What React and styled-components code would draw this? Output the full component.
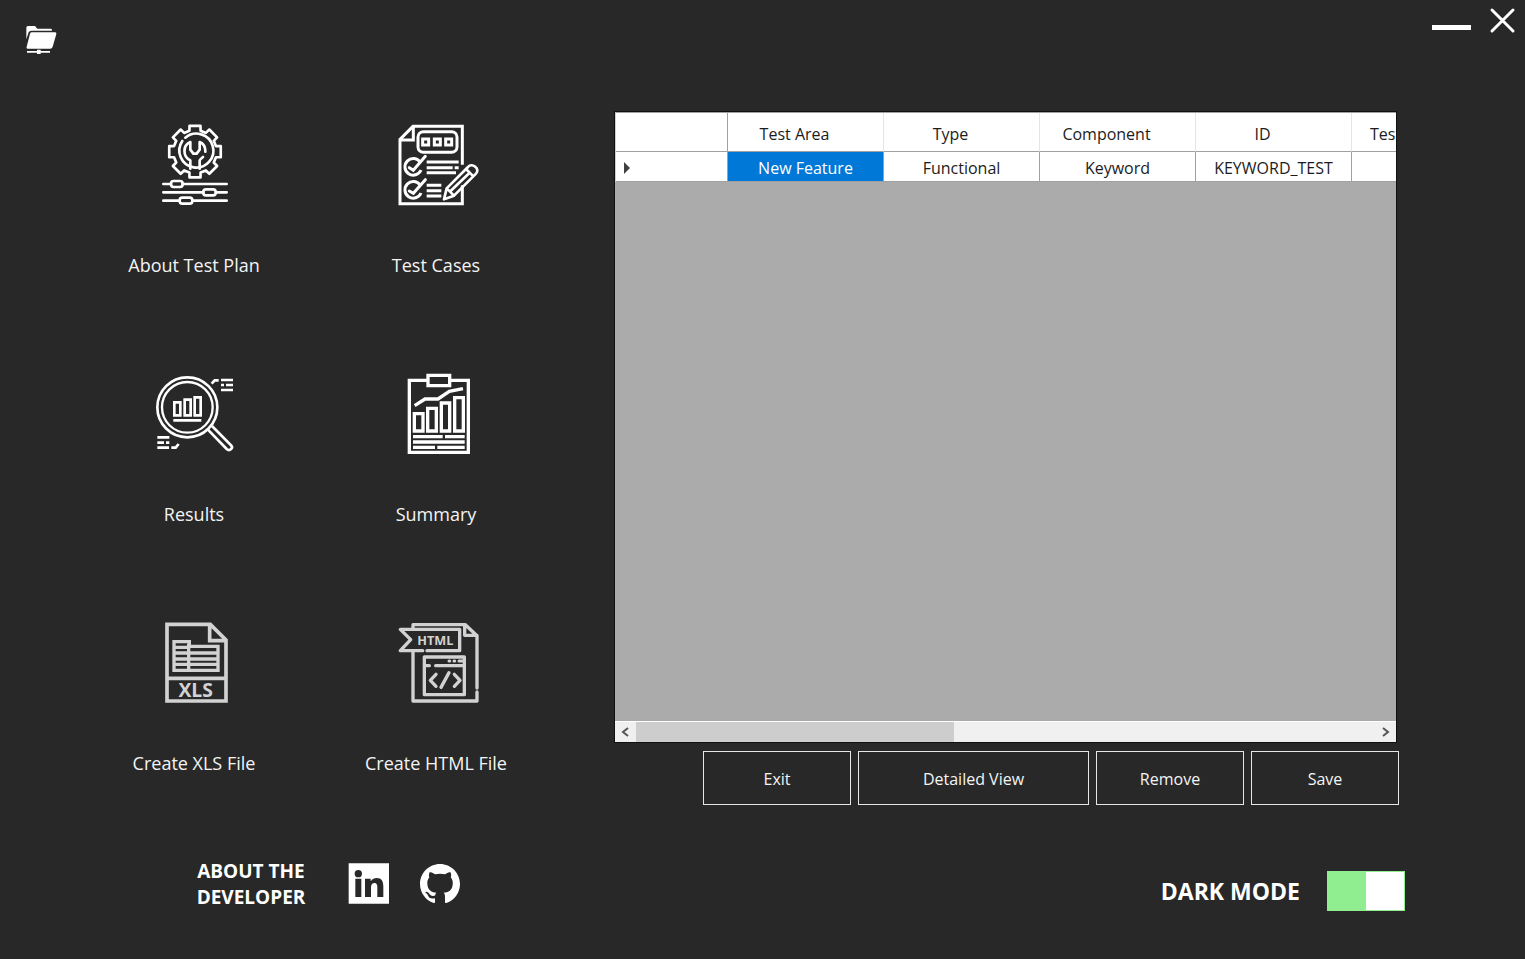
import React, { useState } from "react";
import styled, { createGlobalStyle } from "styled-components";

const GlobalStyle = createGlobalStyle`
  * { box-sizing: border-box; }
  body {
    margin: 0;
    background: #282828;
    color: #fff;
    font-family: "Open Sans", "Noto Sans", sans-serif;
  }
  button { font: inherit; color: inherit; cursor: pointer; }
`;

const Page = styled.div`
  display: flex;
  flex-direction: column;
  min-height: 100vh;
  background: #282828;
`;

const TopBar = styled.header`
  display: flex;
  justify-content: space-between;
  align-items: flex-start;
  height: 111px;
  padding: 6px 9px 0 24px;
`;

const IconButton = styled.button`
  display: flex;
  padding: 0;
  border: 0;
  background: none;
`;

const FolderButton = styled(IconButton)`
  margin-top: 16px;
`;

const WindowControls = styled.div`
  display: flex;
  gap: 16px;
`;

const Main = styled.main`
  display: flex;
  gap: 57px;
  padding: 0 126px 0 73px;
`;

const TileGrid = styled.nav`
  display: grid;
  flex: none;
  grid-template-columns: repeat(2, 242px);
  grid-auto-rows: 249px;
`;

const TileButton = styled.button`
  display: flex;
  flex-direction: column;
  align-items: center;
  gap: 41px;
  padding: 5px 0 0;
  border: 0;
  background: none;
  font-size: 18px;
  line-height: 24px;
  color: #f4f4f4;
`;

const TileIcon = styled.svg`
  width: 96px;
  height: 96px;
  fill: none;
  stroke: ${(p) => (p.$muted ? "#d2d2d2" : "#fff")};
  stroke-width: ${(p) => p.$weight || 9};
  color: ${(p) => (p.$muted ? "#d2d2d2" : "#fff")};
`;

const IconText = styled.text`
  fill: currentColor;
  stroke: none;
  font-family: "Open Sans", sans-serif;
  font-weight: 700;
  font-size: ${(p) => p.$size}px;
  text-anchor: middle;
`;

const Workspace = styled.section`
  display: flex;
  flex: 1;
  flex-direction: column;
  gap: 8px;
  min-width: 0;
  padding-bottom: 53px;
`;

const GridPanel = styled.div`
  display: flex;
  flex: 1;
  flex-direction: column;
  margin-right: 2px;
  border: 1px solid #101010;
  background: #ababab;
`;

const TableViewport = styled.div`
  flex: 1;
  overflow: hidden;
`;

const Table = styled.table`
  width: 893px;
  table-layout: fixed;
  border-collapse: separate;
  border-spacing: 0;
  border-top: 1px solid #a0a0a0;
  border-left: 1px solid #d0d0d0;
  background: #fff;
  color: #1c1c1c;
  font-size: 16px;
`;

const HeadCell = styled.th`
  width: ${(p) => (p.$corner ? 112 : 156)}px;
  height: 39px;
  padding: ${(p) => (p.$clipped ? "3px 0 0 18px" : "3px 22px 0 0")};
  border-right: 1px solid ${(p) => (p.$corner ? "#a0a0a0" : "#e5e5e5")};
  border-bottom: 1px solid #a0a0a0;
  font-weight: 400;
  text-align: ${(p) => (p.$clipped ? "left" : "center")};
`;

const Cell = styled.td`
  height: 30px;
  padding: 2px 0 0;
  border-right: 1px solid #a0a0a0;
  border-bottom: 1px solid #a0a0a0;
  background: ${(p) => (p.$selected ? "#0078d7" : "#fff")};
  color: ${(p) => (p.$selected ? "#fff" : "#1c1c1c")};
  text-align: center;
`;

const RowMarker = styled(Cell)`
  padding-left: 7px;
  text-align: left;
  svg { display: block; }
`;

const ScrollBar = styled.div`
  display: flex;
  height: 21px;
  border-top: 1px solid #fff;
  background: #f0f0f0;
`;

const ScrollButton = styled(IconButton)`
  flex: none;
  align-items: center;
  justify-content: center;
  width: 21px;
`;

const ScrollTrack = styled.div`
  flex: 1;
`;

const ScrollThumb = styled.div`
  width: 43%;
  height: 100%;
  background: #cdcdcd;
`;

const Actions = styled.div`
  display: flex;
  justify-content: flex-end;
  gap: 7px;
`;

const ActionButton = styled.button`
  width: ${(p) => (p.$wide ? 231 : 148)}px;
  height: 54px;
  padding: 2px 0 0;
  border: 1px solid #e6e6e6;
  background: #282828;
  font-size: 16px;
  color: #f4f4f4;
`;

const Footer = styled.footer`
  display: flex;
  justify-content: space-between;
  align-items: flex-start;
  padding: 0 120px 48px 191px;
`;

const Developer = styled.div`
  display: flex;
  align-items: center;
  gap: 30px;
`;

const DeveloperTitle = styled.h2`
  width: 120px;
  margin: 0 7px 0 0;
  font-size: 19px;
  font-weight: 700;
  line-height: 26px;
  text-align: center;
`;

const SocialLink = styled.a`
  display: flex;
  color: #fff;
`;

const ModeLabel = styled.label`
  display: flex;
  align-items: center;
  gap: 27px;
  padding-top: 13px;
  font-size: 23px;
  font-weight: 700;
`;

const ModeSwitch = styled.input`
  display: flex;
  appearance: none;
  width: 78px;
  height: 40px;
  margin: 0;
  padding: 1px;
  border: 0;
  background: ${(p) => (p.checked ? "#90ee90" : "#8a8a8a")};
  cursor: pointer;
  &::after {
    content: "";
    width: 38px;
    height: 38px;
    margin-left: ${(p) => (p.checked ? "auto" : "0")};
    background: #fff;
  }
`;

const gearPath = (() => {
  const points = [];
  for (let k = 0; k < 8; k += 1) {
    [[-15, 65], [-12, 79], [12, 79], [15, 65]].forEach(([offset, radius]) => {
      const angle = ((k * 45 + offset - 90) * Math.PI) / 180;
      points.push(
        `${(150 + radius * Math.cos(angle)).toFixed(1)} ${(125 + radius * Math.sin(angle)).toFixed(1)}`
      );
    });
  }
  return `M${points.join("L")}Z`;
})();

const PlanIcon = () => (
  <TileIcon $weight={8} viewBox="3 18 288 288" strokeLinejoin="round" strokeLinecap="round" aria-hidden="true">
    <path d={gearPath} />
    <path d="M121 83A51 51 0 1 1 112 93" />
    <path d="M164 176V151Q165 148 174 141M181 125C181 110 175 100 164 96V119L155 131H145L136 119V96C113 106 112 139 136 151V176" />
    <path d="M55 222H78M113 222H245M55 247H175M213 247H245M55 272H103M143 272H245" />
    <rect x="78" y="213" width="35" height="18" rx="8" />
    <rect x="175" y="238" width="37" height="18" rx="8" />
    <rect x="104" y="263" width="38" height="18" rx="8" />
  </TileIcon>
);

const CasesIcon = () => (
  <TileIcon viewBox="9 18 288 288" aria-hidden="true">
    <path d="M232 164V49H84L45 88V281H232V226M45 90H85V49" />
    <rect x="99" y="65" width="117" height="62" rx="16" />
    <path d="M113 87H131V105H113ZM148 87H166V105H148ZM182 87H200V105H182Z" />
    <path d="M125 156H221M125 173H203M209 173H221M125 188H213M125 226H169M125 242H169M125 258H169" />
    <path d="M106 157A25 25 0 1 0 108 180M106 226A25 25 0 1 0 108 249" />
    <path d="M73 173L85 181L121 139M73 243L85 250L121 209" strokeLinecap="round" />
    <path d="M177 268L185 235L249 171C261 157 287 177 273 191L207 257ZM185 235L207 257M243 177L266 200M196 244L254 188" strokeWidth="8" strokeLinejoin="round" />
  </TileIcon>
);

const ResultsIcon = () => (
  <TileIcon viewBox="3 15 288 288" aria-hidden="true">
    <circle cx="127" cy="142" r="90" strokeWidth="8" />
    <circle cx="127" cy="142" r="76" strokeWidth="7" />
    <path d="M88 127H106V166H88ZM119 119H137V166H119ZM149 112H167V166H149ZM85 181H169" strokeWidth="8" />
    <path d="M188 208L245 267C254 275 265 265 259 257L201 198" strokeWidth="8" />
    <path d="M200 71L209 61H221M228 60H264M228 75H237M243 75H264M228 90H264M37 232H73M37 248H57M63 248H73M37 263H72M79 263H92L101 252" strokeWidth="8" />
  </TileIcon>
);

const SummaryIcon = () => (
  <TileIcon $weight={10} viewBox="9 15 288 288" aria-hidden="true">
    <path d="M125 61H73V277H250V61H198M129 46H194V77H129Z" />
    <path d="M89 137L120 117H159L193 94L234 86" />
    <path d="M88 161H114V213H88ZM128 145H154V213H128ZM169 129H194V213H169ZM209 113H235V213H209Z" />
    <path d="M84 230H173M180 230H239M84 246H239M84 262H150M157 262H239" />
  </TileIcon>
);

const XlsIcon = () => (
  <TileIcon $muted viewBox="3 12 288 288" aria-hidden="true">
    <path d="M66 43H196L243 90V273H66ZM194 43V92H243M66 205H243" strokeWidth="11" />
    <path d="M87 95H133V109H219V181H87ZM131 101V181M87 112H133M87 129H219M87 147H219M87 163H219" strokeWidth="10" />
    <IconText $size={58} x="152" y="262">XLS</IconText>
  </TileIcon>
);

const HtmlIcon = () => (
  <TileIcon $muted viewBox="9 12 288 288" strokeLinejoin="round" strokeLinecap="round" aria-hidden="true">
    <path d="M84 56V44H241L276 77V234M239 44V76H276M276 246V273H84V125" strokeWidth="10" />
    <path d="M113 122H46L77 89L46 58H224V122H126" strokeWidth="10" />
    <path d="M133 167H118V141H238V254H118V167M152 167H238" strokeWidth="10" />
    <path d="M192 153H194M207 153H209M222 153H232" strokeWidth="9" />
    <path d="M153 193L136 211L153 229M192 188L168 232M208 193L225 211L208 229" strokeWidth="10" />
    <IconText $size={38} x="151" y="105">HTML</IconText>
  </TileIcon>
);

const tiles = [
  { label: "About Test Plan", Icon: PlanIcon },
  { label: "Test Cases", Icon: CasesIcon },
  { label: "Results", Icon: ResultsIcon },
  { label: "Summary", Icon: SummaryIcon },
  { label: "Create XLS File", Icon: XlsIcon },
  { label: "Create HTML File", Icon: HtmlIcon },
];

const columns = ["Test Area", "Type", "Component", "ID", "Test"];
const row = ["New Feature", "Functional", "Keyword", "KEYWORD_TEST", ""];

export default function App() {
  const [dark, setDark] = useState(true);

  return (
    <Page>
      <GlobalStyle />
      <TopBar>
        <FolderButton type="button" aria-label="Open folder">
          <svg width="34" height="34" viewBox="0 0 102 102" fill="#fff">
            <path d="M7 52V17Q7 12 12 12H33L40 20H81Q84 20 84 26H22Q16 26 14 31Z" />
            <path d="M24 31H94Q98 31 97 36L86 74Q84 80 79 80H13Q6 80 8 74L18 35Q19 31 24 31Z" />
            <path d="M9 87H39V83H50V87H78V92H50V96H39V92H9Z" />
          </svg>
        </FolderButton>
        <WindowControls>
          <IconButton type="button" aria-label="Minimize">
            <svg width="42" height="30" viewBox="0 0 42 30" fill="#fff">
              <path d="M2 19H41V24H2Z" />
            </svg>
          </IconButton>
          <IconButton type="button" aria-label="Close">
            <svg width="28" height="28" viewBox="0 0 28 28" stroke="#fff" strokeWidth="3" strokeLinecap="round">
              <path d="M4 4L25 25M25 4L4 25" />
            </svg>
          </IconButton>
        </WindowControls>
      </TopBar>

      <Main>
        <TileGrid>
          {tiles.map(({ label, Icon }) => (
            <TileButton type="button" key={label}>
              <Icon />
              {label}
            </TileButton>
          ))}
        </TileGrid>

        <Workspace>
          <GridPanel>
            <TableViewport>
              <Table>
                <thead>
                  <tr>
                    <HeadCell $corner />
                    {columns.map((name, i) => (
                      <HeadCell key={name} scope="col" $clipped={i === columns.length - 1}>
                        {name}
                      </HeadCell>
                    ))}
                  </tr>
                </thead>
                <tbody>
                  <tr>
                    <RowMarker>
                      <svg width="8" height="12" viewBox="0 0 8 12" fill="#404040" aria-hidden="true">
                        <path d="M1 0L7 6L1 12Z" />
                      </svg>
                    </RowMarker>
                    {row.map((value, i) => (
                      <Cell key={columns[i]} $selected={i === 0}>
                        {value}
                      </Cell>
                    ))}
                  </tr>
                </tbody>
              </Table>
            </TableViewport>
            <ScrollBar>
              <ScrollButton type="button" aria-label="Scroll left">
                <svg width="9" height="10" viewBox="0 0 9 10" fill="none" stroke="#555" strokeWidth="2">
                  <path d="M7 1L2 5L7 9" />
                </svg>
              </ScrollButton>
              <ScrollTrack>
                <ScrollThumb />
              </ScrollTrack>
              <ScrollButton type="button" aria-label="Scroll right">
                <svg width="9" height="10" viewBox="0 0 9 10" fill="none" stroke="#555" strokeWidth="2">
                  <path d="M2 1L7 5L2 9" />
                </svg>
              </ScrollButton>
            </ScrollBar>
          </GridPanel>
          <Actions>
            <ActionButton type="button">Exit</ActionButton>
            <ActionButton type="button" $wide>Detailed View</ActionButton>
            <ActionButton type="button">Remove</ActionButton>
            <ActionButton type="button">Save</ActionButton>
          </Actions>
        </Workspace>
      </Main>

      <Footer>
        <Developer>
          <DeveloperTitle>ABOUT THE DEVELOPER</DeveloperTitle>
          <SocialLink href="#linkedin" aria-label="LinkedIn">
            <svg width="42" height="42" viewBox="0 0 126 126">
              <path d="M2 1H123V122H2Z" fill="#fff" />
              <g fill="#282828">
                <circle cx="31" cy="32" r="11" />
                <path d="M22 47H40V102H22ZM51 47H68V55C73 48 79 45 86 45C101 45 106 55 106 70V102H88V73C88 65 86 60 80 60C72 60 69 66 69 73V102H51Z" />
              </g>
            </svg>
          </SocialLink>
          <SocialLink href="#github" aria-label="GitHub">
            <svg width="40" height="40" viewBox="0 0 16 16" fill="#fff">
              <path d="M8 0C3.58 0 0 3.58 0 8c0 3.54 2.29 6.53 5.47 7.59.4.07.55-.17.55-.38 0-.19-.01-.82-.01-1.49-2.01.37-2.53-.49-2.69-.94-.09-.23-.48-.94-.82-1.13-.28-.15-.68-.52-.01-.53.63-.01 1.08.58 1.23.82.72 1.21 1.87.87 2.33.66.07-.52.28-.87.51-1.07-1.78-.2-3.64-.89-3.64-3.95 0-.87.31-1.59.82-2.15-.08-.2-.36-1.02.08-2.12 0 0 .67-.21 2.2.82.64-.18 1.32-.27 2-.27.68 0 1.36.09 2 .27 1.53-1.04 2.2-.82 2.2-.82.44 1.1.16 1.92.08 2.12.51.56.82 1.27.82 2.15 0 3.07-1.87 3.75-3.65 3.95.29.25.54.73.54 1.48 0 1.07-.01 1.93-.01 2.2 0 .21.15.46.55.38A8.013 8.013 0 0016 8c0-4.42-3.58-8-8-8z" />
            </svg>
          </SocialLink>
        </Developer>
        <ModeLabel>
          DARK MODE
          <ModeSwitch type="checkbox" checked={dark} onChange={(e) => setDark(e.target.checked)} />
        </ModeLabel>
      </Footer>
    </Page>
  );
}
